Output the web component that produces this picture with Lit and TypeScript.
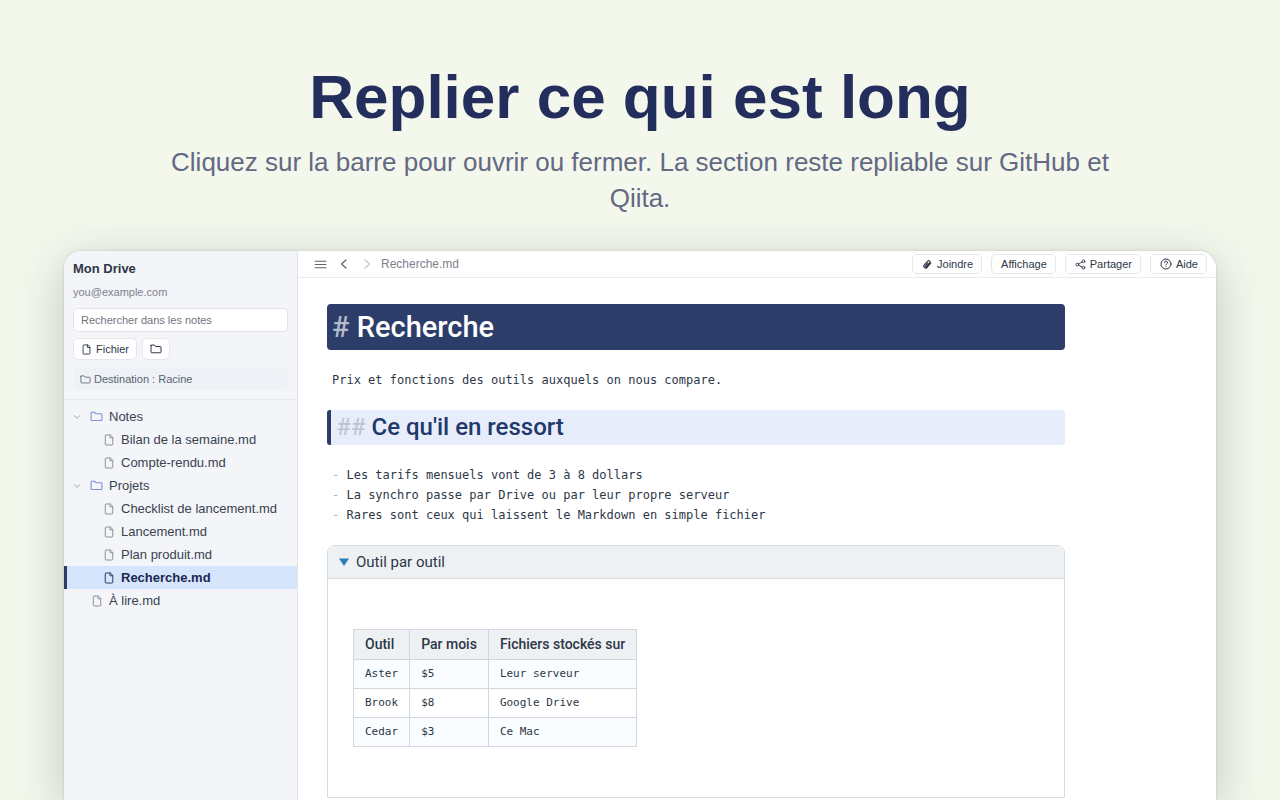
import { LitElement, html, css, svg } from "lit";
import { customElement } from "lit/decorators.js";

const icon = (body: unknown, size: number, cls = "", width = 1.8) => html`<svg
  class="icon ${cls}" width=${size} height=${size} viewBox="0 0 24 24" fill="none"
  stroke="currentColor" stroke-width=${width} stroke-linecap="round" stroke-linejoin="round"
  aria-hidden="true">${body}</svg>`;

const FILE = svg`<path d="M14 2H6a1.500 1.500 0 0 0-1.500 1.500v17A1.500 1.500 0 0 0 6 22h12a1.500 1.500 0 0 0 1.500-1.500V7.500z"/><path d="M14 2v5.500h5.500"/>`;
const FOLDER = svg`<path d="M2 5v13a1.500 1.500 0 0 0 1.500 1.500h17A1.500 1.500 0 0 0 22 18V8.500A1.500 1.500 0 0 0 20.500 7H11L8.500 4H3a1 1 0 0 0-1 1z"/>`;
const DOWN = svg`<path d="M4 8l8 8 8-8"/>`;
const MENU = svg`<path d="M2 6h20M2 12h20M2 18h20"/>`;
const BACK = svg`<path d="M16 4l-9 8 9 8"/>`;
const NEXT = svg`<path d="M8 4l9 8-9 8"/>`;
const CLIP = svg`<path d="M19 9l-8 9.500a4 4 0 0 1-6-5.500L12 5a3 3 0 0 1 5 3.500l-7 8a1.500 1.500 0 0 1-2.500-1.500L13 9"/>`;
const SHARE = svg`<circle cx="18.500" cy="5" r="3"/><circle cx="5" cy="12" r="3"/><circle cx="18.500" cy="19" r="3"/><path d="M8 13.500l7.500 4M15.500 6.500l-7.500 4"/>`;
const HELP = svg`<circle cx="12" cy="12" r="10"/><path d="M9 9.300a3 3 0 1 1 4.200 2.600c-.8.400-1.200 1-1.200 1.900M12 17.200v.1"/>`;

type Entry = { name: string; kind: "folder" | "file"; nested?: boolean; current?: boolean };

const ENTRIES: Entry[] = [
  { name: "Notes", kind: "folder" },
  { name: "Bilan de la semaine.md", kind: "file", nested: true },
  { name: "Compte-rendu.md", kind: "file", nested: true },
  { name: "Projets", kind: "folder" },
  { name: "Checklist de lancement.md", kind: "file", nested: true },
  { name: "Lancement.md", kind: "file", nested: true },
  { name: "Plan produit.md", kind: "file", nested: true },
  { name: "Recherche.md", kind: "file", nested: true, current: true },
  { name: "À lire.md", kind: "file" },
];

@customElement("drive-sidebar")
class DriveSidebar extends LitElement {
  static styles = css`
    :host { display: flex; flex-direction: column; width: 234px; flex: none; box-sizing: border-box;
      background: #f3f5f8; border-right: 1px solid #e1e5ea; color: #2d3748;
      font-family: "Liberation Sans", Arial, sans-serif; font-size: 11px; }
    .icon { display: block; flex: none; }
    .head { display: flex; flex-direction: column; padding: 10px 9px 9px; border-bottom: 1px solid #e6e9ee; }
    .title { margin: 0; font-size: 13px; line-height: 16px; font-weight: 700; }
    .mail { margin-top: 7px; line-height: 16px; color: #7b828e; }
    .search { margin-top: 8px; height: 24px; box-sizing: border-box; width: 100%; padding: 0 7px;
      border: 1px solid #e0e4e9; border-radius: 5px; background: #fff; font: inherit; color: #2d3748; }
    .search::placeholder { color: #6f757f; opacity: 1; }
    .tools { display: flex; gap: 5px; margin-top: 6px; }
    .tool { display: flex; align-items: center; gap: 4px; height: 22px; padding: 0 7px; font: inherit;
      color: inherit; background: #fff; border: 1px solid #e4e8ed; border-radius: 5px; }
    .dest { display: flex; align-items: center; gap: 3px; margin-top: 8px; height: 22px; padding: 0 7px;
      background: #eef2f6; border-radius: 4px; color: #5a6472; }
    .tree { list-style: none; margin: 0; padding: 5px 0; font-size: 13px; }
    .row { display: flex; align-items: center; height: 23px; box-sizing: border-box; padding-left: 6px;
      border-left: 3px solid transparent; color: #3a4250; text-decoration: none; white-space: nowrap; }
    .twist { width: 17px; color: #8d95a0; }
    .label { padding-left: 6px; }
    .folder .glyph { color: #7d90d4; }
    .file { padding-left: 24px; }
    .file .glyph { color: #8d939c; }
    .nested { padding-left: 36px; }
    .current { background: #d5e5fb; border-left-color: #2b3a67; color: #1a2750; font-weight: 700; }
    .current .glyph { color: #2b3a67; }
  `;
  render() {
    return html`
      <div class="head">
        <h2 class="title">Mon Drive</h2>
        <div class="mail">you@example.com</div>
        <input class="search" type="search" aria-label="Rechercher dans les notes" placeholder="Rechercher dans les notes" />
        <div class="tools">
          <button class="tool">${icon(FILE, 11, "", 2)}Fichier</button>
          <button class="tool" aria-label="Nouveau dossier">${icon(FOLDER, 12, "", 2)}</button>
        </div>
        <div class="dest">${icon(FOLDER, 11)}<span>Destination : Racine</span></div>
      </div>
      <ul class="tree">
        ${ENTRIES.map((e) => html`<li>
          <a href="#" class="row ${e.kind} ${e.nested ? "nested" : ""} ${e.current ? "current" : ""}">
            ${e.kind === "folder"
              ? html`<span class="twist">${icon(DOWN, 8, "", 2.5)}</span>${icon(FOLDER, 13, "glyph", 2)}`
              : icon(FILE, 12, "glyph", 2)}
            <span class="label">${e.name}</span>
          </a></li>`)}
      </ul>`;
  }
}

@customElement("note-editor")
class NoteEditor extends LitElement {
  static styles = css`
    :host { display: flex; flex-direction: column; flex: 1; min-width: 0; background: #fff; color: #2d3748; }
    .icon { display: block; flex: none; }
    .bar { display: flex; align-items: center; height: 26px; padding: 0 9px 0 16px; flex: none;
      border-bottom: 1px solid #e9ebef; font-family: "Liberation Sans", Arial, sans-serif; }
    .navs { display: flex; gap: 11px; margin-right: 8px; }
    .nav { display: flex; align-items: center; padding: 0; border: 0; background: none; color: #5c6470; }
    .nav[disabled] { color: #c3c8cf; }
    .name { font-size: 12px; color: #7b828c; }
    .actions { display: flex; gap: 9px; margin-left: auto; }
    .action { display: flex; align-items: center; gap: 4px; height: 20px; padding: 0 8px 0 9px; font: inherit;
      font-size: 11px; color: #2d3748; background: #fff; border: 1px solid #e3e7ec; border-radius: 5px; }
    .doc { box-sizing: border-box; padding: 26px 0 0 29px; max-width: 767px;
      font-family: "DejaVu Sans Mono", monospace; font-size: 12px; line-height: 20px; }
    .h1, .h2, .fold, .sheet th { font-family: Roboto, sans-serif; }
    .h1 { margin: 0; padding: 0 5px; border-radius: 4px; background: #2d3d69; color: #fff;
      font-size: 29px; line-height: 46px; font-weight: 500; }
    .mark1 { color: #b4bccb; }
    .text { margin: 20px 5px; }
    .h2 { margin: 0; padding: 0 5px; border-left: 4px solid #2d3d69; border-radius: 3px; background: #e7edfb;
      color: #21386a; font-size: 24px; line-height: 35px; font-weight: 500; }
    .mark2 { color: #bcc3d0; font-weight: 400; }
    .list { list-style: none; margin: 20px 5px; padding: 0; }
    .dash { color: #a8b0ba; }
    .fold { border: 1px solid #d8dde2; border-radius: 7px 7px 0 0; }
    .summary { display: flex; align-items: center; gap: 6px; height: 32px; padding: 0 11px; list-style: none;
      background: #edf1f4; border-bottom: 1px solid #d8dde2; border-radius: 6px 6px 0 0; font-size: 15px; }
    .body { padding: 50px 25px; }
    .sheet { border-collapse: collapse; font-family: "DejaVu Sans Mono", monospace; font-size: 11px; line-height: 20px; }
    .sheet th { font-size: 14px; line-height: 21px; font-weight: 500; background: #edf1f4; }
    .sheet th, .sheet td { border: 1px solid #d2d7dd; padding: 4px 11px; text-align: left; }
    .sheet td { background: #fafdff; }
    .sheet tr:nth-child(even) td { background: #fff; }
  `;
  render() {
    return html`
      <div class="bar">
        <div class="navs">
          <button class="nav" aria-label="Menu">${icon(MENU, 13, "", 2)}</button>
          <button class="nav" aria-label="Précédent">${icon(BACK, 12, "", 2.5)}</button>
          <button class="nav" aria-label="Suivant" disabled>${icon(NEXT, 12, "", 2.5)}</button>
        </div>
        <span class="name">Recherche.md</span>
        <div class="actions">
          <button class="action">${icon(CLIP, 11, "", 2.6)}Joindre</button>
          <button class="action">Affichage</button>
          <button class="action">${icon(SHARE, 11, "", 2)}Partager</button>
          <button class="action">${icon(HELP, 12, "", 2)}Aide</button>
        </div>
      </div>
      <div class="doc">
        <h1 class="h1"><span class="mark1">#</span> Recherche</h1>
        <p class="text">Prix et fonctions des outils auxquels on nous compare.</p>
        <h2 class="h2"><span class="mark2">##</span> Ce qu'il en ressort</h2>
        <ul class="list">
          <li><span class="dash">-</span> Les tarifs mensuels vont de 3 à 8 dollars</li>
          <li><span class="dash">-</span> La synchro passe par Drive ou par leur propre serveur</li>
          <li><span class="dash">-</span> Rares sont ceux qui laissent le Markdown en simple fichier</li>
        </ul>
        <details class="fold" open>
          <summary class="summary">
            <svg class="icon" width="11" height="8" viewBox="0 0 11 8" aria-hidden="true"><path d="M0 0.500h10L5 8z" fill="#2a7fb8"/></svg>
            Outil par outil
          </summary>
          <div class="body">
            <table class="sheet">
              <thead><tr><th>Outil</th><th>Par mois</th><th>Fichiers stockés sur</th></tr></thead>
              <tbody>
                <tr><td>Aster</td><td>$5</td><td>Leur serveur</td></tr>
                <tr><td>Brook</td><td>$8</td><td>Google Drive</td></tr>
                <tr><td>Cedar</td><td>$3</td><td>Ce Mac</td></tr>
              </tbody>
            </table>
          </div>
        </details>
      </div>`;
  }
}

@customElement("app-root")
class AppRoot extends LitElement {
  static styles = css`
    :host { display: flex; flex-direction: column; height: 100vh; overflow: hidden; box-sizing: border-box;
      padding: 60px 64px 0; background: #f3f7ec; font-family: "Liberation Sans", Arial, sans-serif; }
    .headline { margin: 0; text-align: center; color: #232e5c; font-size: 62px; line-height: 74px; font-weight: 700; }
    .lead { margin: 10px auto 0; max-width: 960px; text-align: center; color: #636983; font-size: 26px; line-height: 36px; }
    .window { display: flex; flex: 1; min-height: 0; margin-top: 35px; overflow: hidden; background: #fff;
      border-radius: 18px 18px 0 0; box-shadow: 0 0 3px rgba(40, 50, 60, 0.16), 0 12px 48px rgba(40, 50, 60, 0.24); }
  `;
  render() {
    return html`
      <h1 class="headline">Replier ce qui est long</h1>
      <p class="lead">Cliquez sur la barre pour ouvrir ou fermer. La section reste repliable sur GitHub et Qiita.</p>
      <div class="window">
        <drive-sidebar></drive-sidebar>
        <note-editor></note-editor>
      </div>`;
  }
}
